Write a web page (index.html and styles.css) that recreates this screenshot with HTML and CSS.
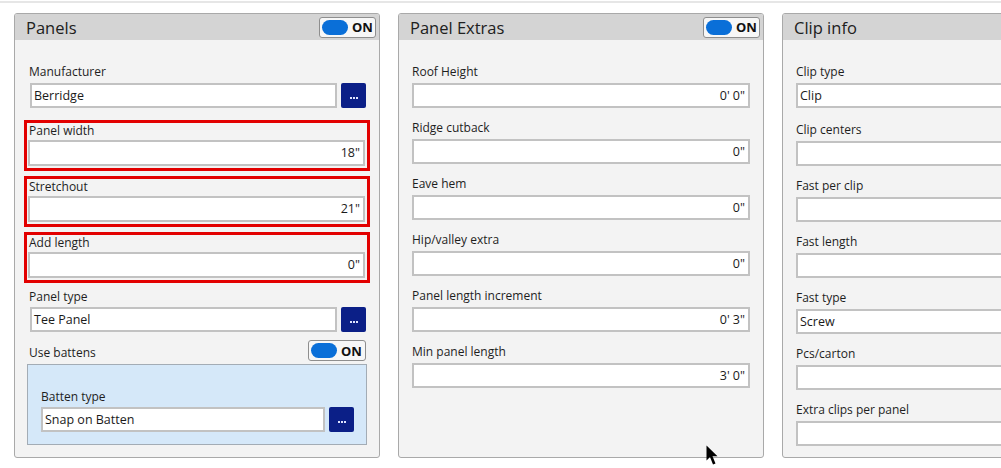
FILE: index.html
```html
<!DOCTYPE html>
<html>
<head>
<meta charset="utf-8">
<link rel="stylesheet" href="styles.css">
</head>
<body>
<div class="topline"></div>
<main class="row">
  <section class="panel">
    <div class="ph"><span class="pt">Panels</span><span class="toggle"><span class="pill"></span><span class="on">ON</span></span></div>
    <div class="pb pb1">
      <div class="field">
        <div class="lbl">Manufacturer</div>
        <div class="irow"><div class="inp">Berridge</div><div class="more"><i class="dot"></i><i class="dot"></i><i class="dot"></i></div></div>
      </div>
      <div class="redbox first">
        <div class="lbl in">Panel width</div>
        <div class="inp tall right">18"</div>
      </div>
      <div class="redbox">
        <div class="lbl in">Stretchout</div>
        <div class="inp tall right">21"</div>
      </div>
      <div class="redbox">
        <div class="lbl in">Add length</div>
        <div class="inp tall right">0"</div>
      </div>
      <div class="field after-red">
        <div class="lbl">Panel type</div>
        <div class="irow"><div class="inp">Tee Panel</div><div class="more"><i class="dot"></i><i class="dot"></i><i class="dot"></i></div></div>
      </div>
      <div class="togrow">
        <div class="lbl">Use battens</div>
        <span class="toggle wide"><span class="pill"></span><span class="on">ON</span></span>
      </div>
      <div class="bluebox">
        <div class="lbl">Batten type</div>
        <div class="irow"><div class="inp">Snap on Batten</div><div class="more"><i class="dot"></i><i class="dot"></i><i class="dot"></i></div></div>
      </div>
    </div>
  </section>

  <section class="panel">
    <div class="ph"><span class="pt">Panel Extras</span><span class="toggle"><span class="pill"></span><span class="on">ON</span></span></div>
    <div class="pb pb2">
      <div class="field f2"><div class="lbl">Roof Height</div><div class="inp right">0' 0"</div></div>
      <div class="field f2"><div class="lbl">Ridge cutback</div><div class="inp right">0"</div></div>
      <div class="field f2"><div class="lbl">Eave hem</div><div class="inp right">0"</div></div>
      <div class="field f2"><div class="lbl">Hip/valley extra</div><div class="inp right">0"</div></div>
      <div class="field f2"><div class="lbl">Panel length increment</div><div class="inp right">0' 3"</div></div>
      <div class="field f2"><div class="lbl">Min panel length</div><div class="inp right">3' 0"</div></div>
    </div>
  </section>

  <section class="panel">
    <div class="ph"><span class="pt">Clip info</span></div>
    <div class="pb pb3">
      <div class="field f3 firstf"><div class="lbl">Clip type</div><div class="inp">Clip</div></div>
      <div class="field f3"><div class="lbl">Clip centers</div><div class="inp"></div></div>
      <div class="field f3"><div class="lbl">Fast per clip</div><div class="inp"></div></div>
      <div class="field f3"><div class="lbl">Fast length</div><div class="inp"></div></div>
      <div class="field f3"><div class="lbl">Fast type</div><div class="inp">Screw</div></div>
      <div class="field f3"><div class="lbl">Pcs/carton</div><div class="inp"></div></div>
      <div class="field f3"><div class="lbl">Extra clips per panel</div><div class="inp"></div></div>
    </div>
  </section>
</main>
<svg class="cursor" width="14" height="22" viewBox="0 0 14 22"><path d="M0.5 0.5 L0.5 15.5 L4 12 L7 19.5 L9.5 18.5 L6.5 11.2 L11.5 11.2 Z" fill="#000"/></svg>
</body>
</html>
```
FILE: styles.css
```css
html, body {
  margin: 0;
  padding: 0;
  width: 1001px;
  height: 468px;
  overflow: hidden;
  background: #ffffff;
}
body {
  font-family: "Open Sans", "Noto Sans", sans-serif;
  font-size: 12px;
  color: #1b1b1b;
  position: relative;
}
.topline {
  height: 2px;
  margin-top: 1px;
  background: #e6e6e6;
}
.row {
  display: flex;
  gap: 18px;
  padding: 10px 0 0 14px;
}
.panel {
  flex: 0 0 366px;
  height: 445px;
  box-sizing: border-box;
  border: 1px solid #a9a9a9;
  border-radius: 3px;
  background: #f3f3f3;
  overflow: hidden;
  display: flex;
  flex-direction: column;
}
.ph {
  height: 26px;
  flex: 0 0 26px;
  background: #d4d4d4;
  display: flex;
  align-items: center;
  justify-content: space-between;
  padding: 0 3px 0 11px;
}
.pt {
  font-size: 16.5px;
  color: #202020;
}
.toggle {
  width: 57px;
  height: 21px;
  box-sizing: border-box;
  border: 1px solid #8e8e8e;
  border-radius: 3px;
  background: #f7f7f7;
  display: flex;
  align-items: center;
  padding-left: 2px;
  gap: 4px;
}
.toggle.wide { width: 58px; }
.pill {
  width: 26px;
  height: 15px;
  border-radius: 8px;
  background: #0a6fd8;
}
.on {
  font-weight: 700;
  font-size: 13px;
  color: #111;
  font-family: "Noto Sans", "Open Sans", sans-serif;
}
.pb {
  padding: 24px 13px 0 13px;
  display: flex;
  flex-direction: column;
}
.pb1 { padding-left: 15px; }
.lbl {
  line-height: 16px;
  height: 16px;
  white-space: nowrap;
  color: #1e1e1e;
}
.field .lbl { margin-bottom: 3px; }
.pb1 > .field > .lbl { margin-left: -1px; }
.lbl.in { padding-left: 1px; margin-bottom: 1px; }
.irow {
  display: flex;
  gap: 4px;
}
.inp {
  flex: 1;
  height: 25px;
  box-sizing: border-box;
  border: 2px solid #c2c2c2;
  background: #ffffff;
  padding: 0 3px 0 2px;
  line-height: 21px;
  font-size: 12.5px;
  color: #1a1a1a;
  white-space: nowrap;
}
.inp.tall { height: 26px; line-height: 22px; flex: none; }
.inp.right { text-align: right; }
.more {
  flex: 0 0 25px;
  height: 25px;
  border-radius: 2px;
  background: #0b1f87;
  display: flex;
  justify-content: center;
  align-items: center;
  gap: 1px;
  padding-top: 4px;
  box-sizing: border-box;
}
.dot {
  width: 2px;
  height: 2px;
  background: #dfe4ff;
}
.redbox {
  margin: 5px -4px 0 -6px;
  height: 51px;
  box-sizing: border-box;
  border: 3px solid #e20000;
  padding: 0 2px 2px 1px;
}
.redbox.first { margin-top: 12px; }
.after-red { margin-top: 6px; }
.after-red .lbl { margin-bottom: 2px; }
.togrow {
  margin-top: 8px;
  display: flex;
  justify-content: space-between;
  align-items: flex-end;
}
.togrow .lbl { margin-bottom: 0; margin-left: -1px; }
.bluebox {
  margin: 3px -1px 0 -3px;
  height: 81px;
  box-sizing: border-box;
  border: 1px solid #a3acb5;
  background: #d5e8f9;
  padding: 24px 12px 0 13px;
}
.bluebox .lbl { margin-bottom: 2px; }
.f2 { margin-bottom: 12px; }
.f2 .inp, .f3 .inp { flex: none; }
.f3 { margin-bottom: 12px; }
.f3.firstf { margin-bottom: 14px; }
.pb3 { padding-right: 0; }
.cursor {
  position: absolute;
  left: 706px;
  top: 445px;
}
```
